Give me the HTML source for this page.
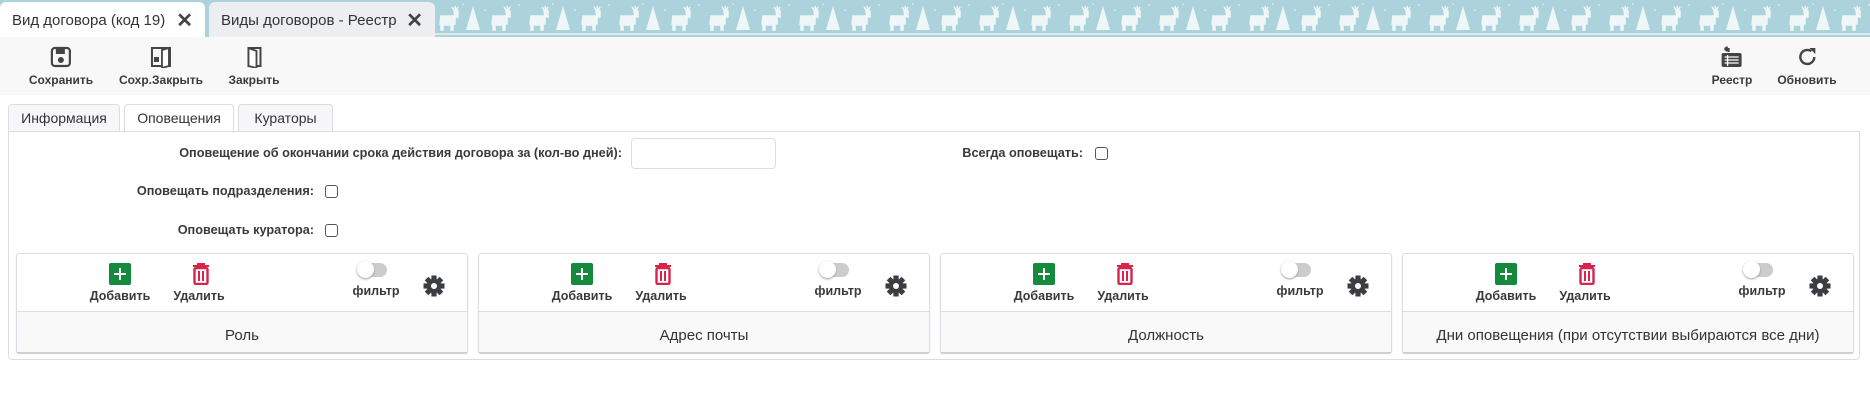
<!DOCTYPE html>
<html><head><meta charset="utf-8">
<style>
*{box-sizing:border-box;margin:0;padding:0}
body{width:1870px;height:420px;background:#fff;font-family:"Liberation Sans",sans-serif;color:#333;position:relative;overflow:hidden}
.abs{position:absolute}
.tabbar{left:0;top:0;width:1870px;height:37px;background:#acd3db}
.tab{top:2px;height:35px;border-radius:6px 6px 0 0;font-size:15px;color:#333;padding:0 0 0 12px;line-height:38px}
.tab .x{position:absolute;right:12px;top:0;font-size:20px;font-weight:bold;color:#444}
.toolbar{left:0;top:37px;width:1870px;height:58px;background:#f8f8f8}
.tb{position:absolute;top:0;text-align:center;font-size:12px;font-weight:bold;color:#3a3a3a;transform:translateX(-50%)}
.tb svg{display:block;margin:9px auto 5px}
.stab{top:104px;height:28px;border:1px solid #dcdce4;border-bottom:none;border-radius:4px 4px 0 0;background:#f7f7f9;font-size:14px;text-align:center;line-height:27px}
.panel{left:8px;top:131px;width:1852px;height:229px;border:1px solid #dcdce4;border-radius:0 0 4px 4px}
.lbl{font-size:12.7px;font-weight:bold;color:#3a3a3a;text-align:right;white-space:nowrap}
.cb{width:13px;height:13px;border:1px solid #555;border-radius:3px;background:#fff}
.card{top:253px;width:452px;height:99px;border:1px solid #dcdce4;border-radius:3px;box-shadow:0 2px 1px #ccc;background:#fff}
.card .foot{position:absolute;left:0;top:57px;width:100%;height:41px;background:#f9f9f9;border-top:1px solid #dcdce4;text-align:center;font-size:15px;line-height:48px;color:#333}
.card .t{position:absolute;font-size:12.5px;font-weight:bold;color:#3a3a3a;transform:translateX(-50%);white-space:nowrap}
</style></head><body>
<div class="abs tabbar">
<svg width="1870" height="37" style="position:absolute;left:0;top:0">
<defs><pattern id="p" x="435" y="0" width="90" height="37" patternUnits="userSpaceOnUse">
<g fill="#fff" opacity=".8">
<path d="M6 16h14v8h-2v6h-2v-5h-8v5h-2v-6h-1zM19 11h4v6h-3zM20 6l1 5M17 7l3 4M23 7l-2 4" stroke="#fff" stroke-width="1.5"/>
<path d="M38 6l7 24h-14z"/>
<path d="M58 16h14v8h-2v6h-2v-5h-8v5h-2v-6h-1zM71 11h4v6h-3zM72 6l1 5M69 7l3 4M75 7l-2 4" stroke="#fff" stroke-width="1.5"/>
<rect x="0" y="33" width="90" height="2" opacity=".7"/>
<circle cx="28" cy="4" r=".8"/><circle cx="50" cy="10" r=".8"/><circle cx="84" cy="5" r=".8"/>
</g></pattern></defs>
<rect x="435" y="0" width="1435" height="37" fill="url(#p)"/>
</svg>
</div>
<div class="abs tab" style="left:0;width:205px;background:#fff">Вид договора (код 19)<span class="x">✕</span></div>
<div class="abs tab" style="left:209px;width:226px;background:#eceef2">Виды договоров - Реестр<span class="x">✕</span></div>

<div class="abs toolbar">
<div class="tb" style="left:61px"><svg width="22" height="22" viewBox="0 0 22 22"><rect x="2" y="2" width="18" height="18" rx="3" fill="none" stroke="#444" stroke-width="2.2"/><rect x="6" y="3" width="9" height="5" fill="#444"/><circle cx="11" cy="14" r="3" fill="#444"/></svg>Сохранить</div>
<div class="tb" style="left:161px"><svg width="22" height="22" viewBox="0 0 22 22"><rect x="2" y="2" width="18" height="18" fill="none" stroke="#444" stroke-width="2"/><path d="M12 4l7-2v18l-7 2z" fill="#fff" stroke="#444" stroke-width="1.8"/><rect x="4" y="11" width="5" height="5" fill="#444"/></svg>Сохр.Закрыть</div>
<div class="tb" style="left:254px"><svg width="22" height="22" viewBox="0 0 22 22"><path d="M5 2h12v18H5z" fill="none" stroke="#444" stroke-width="2"/><path d="M5 2l8 3v17l-8-2z" fill="#fff" stroke="#444" stroke-width="1.8"/></svg>Закрыть</div>
<div class="tb" style="left:1732px"><svg width="24" height="22" viewBox="0 0 24 22"><path d="M9 6V3H5M5 3l3-2M5 3l3 2" stroke="#444" stroke-width="2" fill="none"/><rect x="2" y="7" width="20" height="14" rx="2" fill="#444"/><path d="M5 11h14M5 14h14M5 17h14" stroke="#fff" stroke-width="1.3"/><path d="M8 9v11" stroke="#fff" stroke-width="1.3"/></svg>Реестр</div>
<div class="tb" style="left:1807px"><svg width="22" height="22" viewBox="0 0 22 22"><path d="M18 11a7 7 0 1 1-3-5.8" fill="none" stroke="#444" stroke-width="2.4"/><path d="M13 2h6v6z" fill="#444"/></svg>Обновить</div>
</div>

<div class="abs stab" style="left:8px;width:112px">Информация</div>
<div class="abs stab" style="left:124px;width:110px;background:#fff;height:29px">Оповещения</div>
<div class="abs stab" style="left:238px;width:95px">Кураторы</div>
<div class="abs panel"></div>
<div class="abs" style="left:234px;top:131px;width:1626px;height:1px;background:#dcdce4"></div>
<div class="abs" style="left:8px;top:131px;width:116px;height:1px;background:#dcdce4"></div>

<div class="abs lbl" style="right:1248px;top:146px">Оповещение об окончании срока действия договора за (кол-во дней):</div>
<div class="abs" style="left:631px;top:138px;width:145px;height:31px;border:1px solid #ddd;border-radius:4px"></div>
<div class="abs lbl" style="right:787px;top:146px">Всегда оповещать:</div>
<div class="abs cb" style="left:1095px;top:147px"></div>
<div class="abs lbl" style="right:1556px;top:184px">Оповещать подразделения:</div>
<div class="abs cb" style="left:325px;top:185px"></div>
<div class="abs lbl" style="right:1556px;top:223px">Оповещать куратора:</div>
<div class="abs cb" style="left:325px;top:224px"></div>

<div id="cards"></div>
<script>
var gear='<svg style="position:absolute;left:406px;top:21px" width="22" height="22" viewBox="-11 -11 22 22"><g fill="#3a3d42">';
for(var a=0;a<8;a++){gear+='<rect x="-2.6" y="-10.5" width="5.2" height="5" transform="rotate('+(a*45)+')"/>';}
gear+='<circle r="7.3"/></g><circle r="3" fill="#fff"/></svg>';
var xs=[16,478,940,1402],tt=["Роль","Адрес почты","Должность","Дни оповещения (при отсутствии выбираются все дни)"],h="";
for(var i=0;i<4;i++){h+='<div class="abs card" style="left:'+xs[i]+'px">'+
'<svg style="position:absolute;left:92px;top:9px" width="22" height="22"><rect width="22" height="22" rx="2" fill="#158a3e"/><path d="M11 5v12M5 11h12" stroke="#fff" stroke-width="2"/></svg>'+
'<div class="t" style="left:103px;top:35px">Добавить</div>'+
'<svg style="position:absolute;left:175px;top:9px" width="18" height="22" viewBox="0 0 18 22"><path d="M1 3h16M6 3V1h6v2" stroke="#d9234a" stroke-width="2" fill="none"/><rect x="2.5" y="5" width="13" height="16" rx="1.5" fill="none" stroke="#d9234a" stroke-width="2.4"/><path d="M7 8v10M11 8v10" stroke="#d9234a" stroke-width="2"/></svg>'+
'<div class="t" style="left:182px;top:35px">Удалить</div>'+
'<div style="position:absolute;left:342px;top:9px;width:28px;height:14px;border-radius:7px;background:#ccc"></div><div style="position:absolute;left:340px;top:7px;width:17px;height:17px;border-radius:50%;background:#fff;box-shadow:0 1px 2px #999"></div>'+
'<div class="t" style="left:359px;top:30px">фильтр</div>'+gear+
'<div class="foot">'+tt[i]+'</div></div>';}
document.getElementById("cards").innerHTML=h;
</script>
</body></html>
